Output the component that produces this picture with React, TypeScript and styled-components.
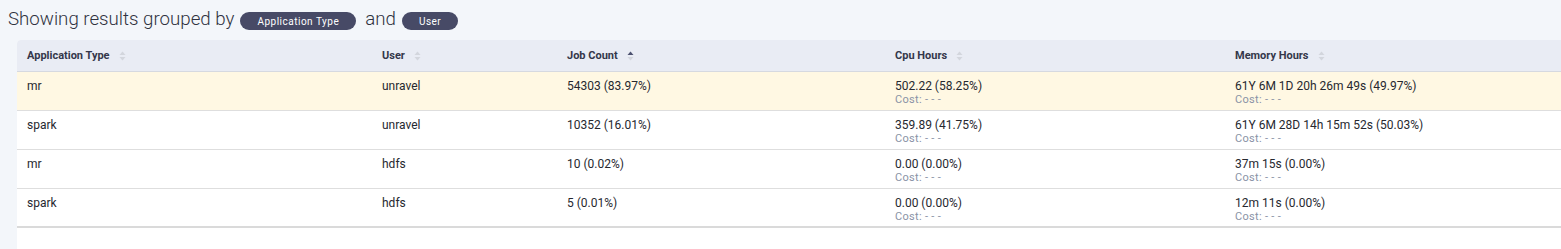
import React from 'react'
import styled, { createGlobalStyle } from 'styled-components'

const GlobalStyle = createGlobalStyle`
  html, body {
    margin: 0;
    padding: 0;
    background: #f3f6fa;
    font-family: Roboto, "Liberation Sans", Arial, sans-serif;
  }
`

type Row = {
  appType: string
  user: string
  jobCount: string
  cpu: string
  memory: string
}

const ROWS: Row[] = [
  { appType: 'mr', user: 'unravel', jobCount: '54303 (83.97%)', cpu: '502.22 (58.25%)', memory: '61Y 6M 1D 20h 26m 49s (49.97%)' },
  { appType: 'spark', user: 'unravel', jobCount: '10352 (16.01%)', cpu: '359.89 (41.75%)', memory: '61Y 6M 28D 14h 15m 52s (50.03%)' },
  { appType: 'mr', user: 'hdfs', jobCount: '10 (0.02%)', cpu: '0.00 (0.00%)', memory: '37m 15s (0.00%)' },
  { appType: 'spark', user: 'hdfs', jobCount: '5 (0.01%)', cpu: '0.00 (0.00%)', memory: '12m 11s (0.00%)' },
]

const COLUMNS = [
  { label: 'Application Type', width: 355, sort: 'none' },
  { label: 'User', width: 185, sort: 'none' },
  { label: 'Job Count', width: 328, sort: 'asc' },
  { label: 'Cpu Hours', width: 340, sort: 'none' },
  { label: 'Memory Hours', width: 336, sort: 'none' },
]

const SortIcon: React.FC<{ dir: string }> = ({ dir }) => (
  <SortSvg width="7" height="10" viewBox="0 0 7 10">
    <path d="M3.5 0.5 L6.5 4 L0.5 4 Z" fill={dir === 'asc' ? '#4d5270' : '#d3d6dd'} />
    <path d="M3.5 9.5 L6.5 6 L0.5 6 Z" fill="#d3d6dd" />
  </SortSvg>
)

const App: React.FC = () => {
  return (
    <Page>
      <GlobalStyle />
      <Title>
        Showing results grouped by<Chip>Application Type</Chip>and<Chip>User</Chip>
      </Title>
      <Panel>
        <HeaderRow>
          {COLUMNS.map(col => (
            <HeaderCell key={col.label} $width={col.width}>
              {col.label}
              <SortIcon dir={col.sort} />
            </HeaderCell>
          ))}
        </HeaderRow>
        {ROWS.map((row, i) => (
          <BodyRow key={i} $highlight={i === 0} $last={i === ROWS.length - 1}>
            <Cell $width={355}>{row.appType}</Cell>
            <Cell $width={185}>{row.user}</Cell>
            <Cell $width={328}>{row.jobCount}</Cell>
            <Cell $width={340}>
              {row.cpu}
              <Cost>Cost: - - -</Cost>
            </Cell>
            <Cell $width={336}>
              {row.memory}
              <Cost>Cost: - - -</Cost>
            </Cell>
          </BodyRow>
        ))}
      </Panel>
    </Page>
  )
}

export default App

const Page = styled.div`
  width: 1561px;
  height: 249px;
  overflow: hidden;
  display: flex;
  flex-direction: column;
`

const Title = styled.div`
  height: 40px;
  display: flex;
  align-items: center;
  gap: 6px;
  padding: 0 0 3px 8px;
  box-sizing: border-box;
  font-size: 18.7px;
  font-weight: 300;
  color: #2f3240;
  white-space: pre;
`

const Chip = styled.span`
  display: inline-flex;
  align-items: center;
  height: 18px;
  padding: 0 17px;
  margin: 5px 3px 0 0;
  border-radius: 9px;
  background: #474a66;
  color: #ffffff;
  font-size: 10px;
  font-weight: 400;
  letter-spacing: 0.5px;
`

const Panel = styled.div`
  flex: 1;
  margin-left: 17px;
  background: #ffffff;
  border-top-left-radius: 4px;
`

const HeaderRow = styled.div`
  display: flex;
  height: 31px;
  background: #e9ecf4;
  border-bottom: 1px solid #d6d9e0;
  border-top-left-radius: 4px;
`

const HeaderCell = styled.div<{ $width: number }>`
  width: ${p => p.$width}px;
  flex-shrink: 0;
  display: flex;
  align-items: center;
  gap: 9px;
  padding-left: 10px;
  box-sizing: border-box;
  font-size: 11px;
  font-weight: 700;
  color: #34374a;
`

const SortSvg = styled.svg`
  display: block;
`

const BodyRow = styled.div<{ $highlight: boolean; $last: boolean }>`
  display: flex;
  height: 39px;
  box-sizing: border-box;
  background: ${p => (p.$highlight ? '#fff8e3' : '#ffffff')};
  border-bottom: ${p => (p.$last ? '2px solid #dadada' : '1px solid #dedede')};
`

const Cell = styled.div<{ $width: number }>`
  width: ${p => p.$width}px;
  flex-shrink: 0;
  padding: 7px 0 0 10px;
  box-sizing: border-box;
  font-size: 12px;
  line-height: 14px;
  color: #26282f;
`

const Cost = styled.div`
  color: #8a93a6;
  font-size: 11px;
  line-height: 13px;
  letter-spacing: 0.3px;
`
